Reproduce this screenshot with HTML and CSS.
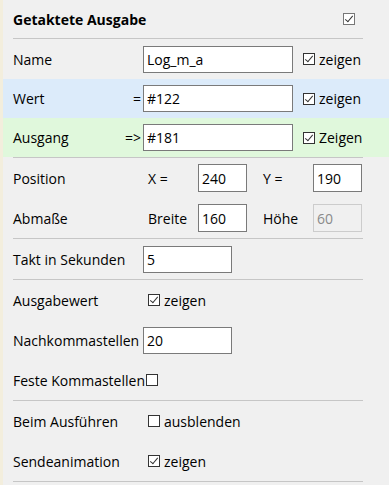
FILE: index.html
```html
<!DOCTYPE html>
<html lang="de">
<head>
    <meta charset="UTF-8">
    <title>Getaktete Ausgabe</title>
    <link rel="stylesheet" href="styles.css">
</head>
<body>
    <div class="panel">
        <div class="header">
            <span class="title">Getaktete Ausgabe</span>
            <span class="check check-light checked"></span>
        </div>
        <div class="divider"></div>

        <div class="row">
            <span class="label">Name</span>
            <input class="field wide" type="text" value="Log_m_a">
            <label class="opt"><span class="check checked"></span>zeigen</label>
        </div>
        <div class="row row-blue">
            <span class="label">Wert</span>
            <span class="op">=</span>
            <input class="field wide" type="text" value="#122">
            <label class="opt"><span class="check checked"></span>zeigen</label>
        </div>
        <div class="row row-green">
            <span class="label">Ausgang</span>
            <span class="op">=&gt;</span>
            <input class="field wide" type="text" value="#181">
            <label class="opt"><span class="check checked"></span>Zeigen</label>
        </div>
        <div class="divider"></div>

        <div class="row">
            <span class="label label-short">Position</span>
            <span class="coord">X =</span>
            <input class="field small" type="text" value="240">
            <span class="coord coord-y">Y =</span>
            <input class="field small" type="text" value="190">
        </div>
        <div class="row">
            <span class="label label-short">Abmaße</span>
            <span class="coord">Breite</span>
            <input class="field small" type="text" value="160">
            <span class="coord coord-y">Höhe</span>
            <input class="field small" type="text" value="60" disabled>
        </div>
        <div class="divider"></div>

        <div class="row">
            <span class="label">Takt in Sekunden</span>
            <input class="field mid" type="text" value="5">
        </div>
        <div class="divider"></div>

        <div class="row">
            <span class="label label-short">Ausgabewert</span>
            <label class="opt"><span class="check checked"></span>zeigen</label>
        </div>
        <div class="row">
            <span class="label">Nachkommastellen</span>
            <input class="field mid" type="text" value="20">
        </div>
        <div class="row">
            <span class="label label-free">Feste Kommastellen</span>
            <span class="check"></span>
        </div>
        <div class="divider"></div>

        <div class="row">
            <span class="label label-short">Beim Ausführen</span>
            <label class="opt"><span class="check"></span>ausblenden</label>
        </div>
        <div class="row">
            <span class="label label-short">Sendeanimation</span>
            <label class="opt"><span class="check checked"></span>zeigen</label>
        </div>
        <div class="divider"></div>
    </div>
</body>
</html>
```

FILE: styles.css
```css
* {
    margin: 0;
    padding: 0;
    box-sizing: border-box;
}

body {
    font-family: "Open Sans", "Noto Sans", sans-serif;
    font-size: 14px;
    color: #000;
    background: #f0f0f0;
    width: 389px;
    height: 485px;
    overflow: hidden;
}

.panel {
    border-left: 3px solid #f3eedd;
    min-height: 485px;
}

.header {
    height: 38px;
    display: flex;
    align-items: center;
    padding-left: 10px;
}

.title {
    font-weight: 700;
    font-size: 14px;
    width: 330px;
}

.divider {
    height: 1px;
    background: #c6c6c6;
    margin: 0 26px 0 10px;
}

.row {
    height: 40px;
    display: flex;
    align-items: center;
    padding-left: 10px;
}

.row-blue {
    background: #dcebfa;
    height: 39px;
}

.row-green {
    background: #e0f8dc;
    height: 39px;
}

.label {
    width: 130px;
    white-space: nowrap;
}

.row-blue .label,
.row-green .label {
    width: 110px;
}

.op {
    width: 20px;
    text-align: right;
    padding-right: 2px;
}

.label-short {
    width: 135px;
}

.label-free {
    width: auto;
    margin-right: 1px;
}

.field {
    height: 27px;
    border: 1px solid #7a7a7a;
    background: #fff;
    font: inherit;
    color: #000;
    padding: 0 3px;
    outline: none;
}

.field:disabled {
    border-color: #cccccc;
    background: #f0f0f0;
    color: #8a8a8a;
}

.wide {
    width: 150px;
}

.mid {
    width: 89px;
}

.small {
    width: 49px;
    height: 28px;
}

.coord {
    width: 50px;
}

.coord-y {
    margin-left: 16px;
}

.opt {
    display: flex;
    align-items: center;
    gap: 4px;
}

.row .field + .opt {
    margin-left: 10px;
}

.check {
    display: inline-block;
    width: 12px;
    height: 12px;
    border: 1px solid #333;
    background: #fff;
    position: relative;
}

.check-light {
    border-color: #777;
}

.check.checked::after {
    content: "";
    position: absolute;
    left: 3px;
    top: 0;
    width: 3px;
    height: 7px;
    border: solid #333;
    border-width: 0 1px 1px 0;
    transform: rotate(40deg);
}
```
